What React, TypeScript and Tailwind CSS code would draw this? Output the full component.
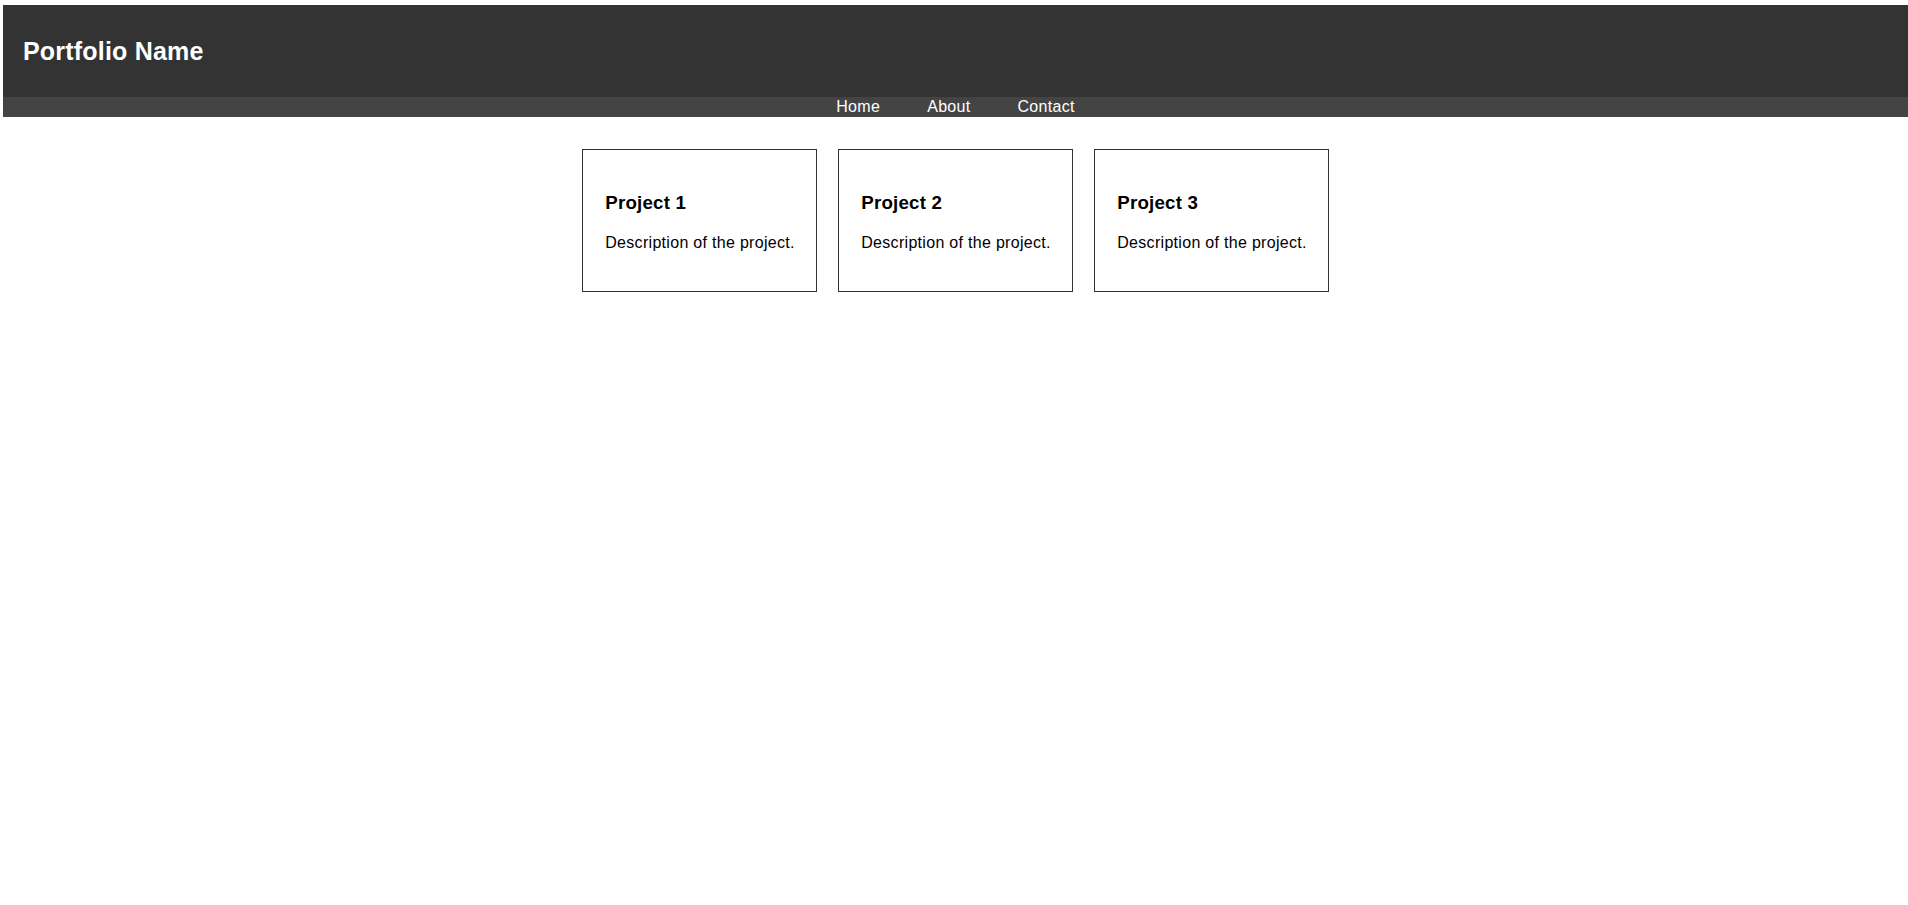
import React from "react";

export default function App() {
  const projects = ["Project 1", "Project 2", "Project 3"];
  return (
    <div
      className="min-h-[905px] bg-white pl-[3px] pt-[5px]"
      style={{ fontFamily: '"Liberation Sans", Arial, sans-serif' }}
    >
      <header>
        <div className="flex h-[92px] items-center bg-[#333333] px-[20px]">
          <h1 className="text-[25px] font-bold leading-[28px] tracking-[0.2px] text-white">
            Portfolio Name
          </h1>
        </div>
        <nav className="flex h-[20px] items-start justify-center gap-[47px] bg-[#444444] pt-[1px]">
          <a className="text-[16px] leading-[18px] tracking-[0.3px] text-white">Home</a>
          <a className="text-[16px] leading-[18px] tracking-[0.3px] text-white">About</a>
          <a className="text-[16px] leading-[18px] tracking-[0.3px] text-white">Contact</a>
        </nav>
      </header>
      <main className="flex justify-center gap-[21.5px] pt-[32px]">
        {projects.map((p) => (
          <div
            key={p}
            className="box-border w-[234.5px] border border-[#333333] pl-[22px] pr-[18px] pt-[42px] pb-[39px] text-black"
          >
            <h3 className="text-[18.72px] font-bold leading-[22px] tracking-[0.2px]">{p}</h3>
            <p className="mt-[20px] whitespace-nowrap text-[16px] leading-[18px] tracking-[0.3px]">
              Description of the project.
            </p>
          </div>
        ))}
      </main>
    </div>
  );
}
